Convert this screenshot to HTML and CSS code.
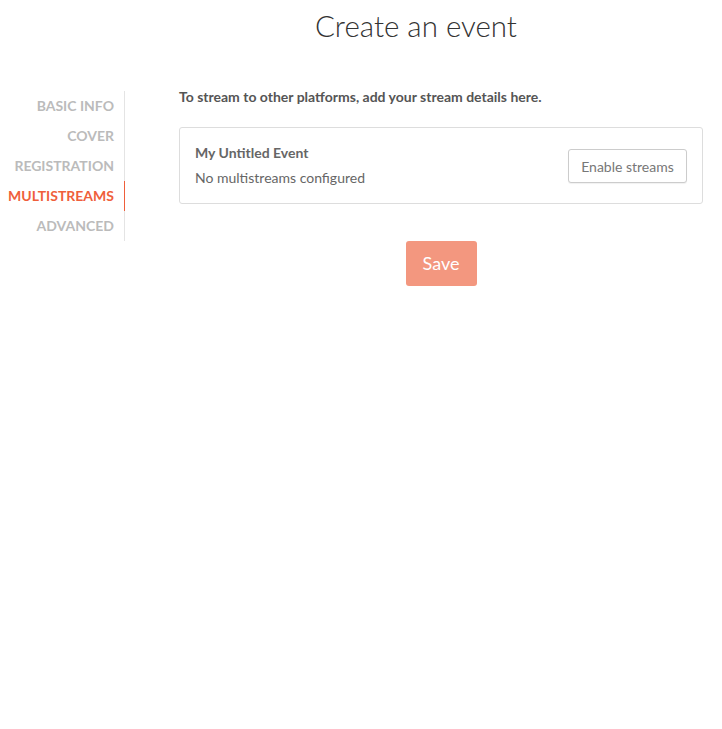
FILE: index.html
```html
<!DOCTYPE html>
<html>
<head>
<meta charset="utf-8">
<title>Create an event</title>
<link rel="stylesheet" href="styles.css">
</head>
<body>
  <header class="page-header">
    <h1 class="page-title">Create an event</h1>
  </header>
  <div class="layout">
    <nav class="sidebar">
      <a class="nav-item">BASIC INFO</a>
      <a class="nav-item">COVER</a>
      <a class="nav-item">REGISTRATION</a>
      <a class="nav-item active">MULTISTREAMS</a>
      <a class="nav-item">ADVANCED</a>
    </nav>
    <main class="content">
      <p class="intro">To stream to other platforms, add your stream details here.</p>
      <div class="card">
        <div class="card-text">
          <div class="card-title">My Untitled Event</div>
          <div class="card-sub">No multistreams configured</div>
        </div>
        <button class="btn-secondary">Enable streams</button>
      </div>
      <div class="actions">
        <button class="btn-save">Save</button>
      </div>
    </main>
  </div>
</body>
</html>
```

FILE: styles.css
```css
* { box-sizing: border-box; }
html, body { margin: 0; padding: 0; background: #fff; }
body {
  font-family: Lato, "Open Sans", "Liberation Sans", sans-serif;
  color: #555;
  width: 722px;
}
.page-header {
  padding: 8px 0 0 110px;
}
.page-title {
  margin: 0;
  font-size: 29.5px;
  line-height: 36px;
  font-weight: 300;
  color: #333;
  text-align: center;
}
.layout {
  display: flex;
  margin-top: 43px;
}
.sidebar {
  width: 125px;
  margin-top: 4px;
  display: flex;
  flex-direction: column;
}
.nav-item {
  display: block;
  height: 30px;
  line-height: 30px;
  padding-right: 10px;
  text-align: right;
  font-size: 14px;
  font-weight: 700;
  color: #bbb;
  border-right: 1px solid #e4e4e4;
  white-space: nowrap;
}
.nav-item.active {
  color: #ef5f3b;
  border-right-color: #ef5f3b;
}
.content {
  margin-left: 54px;
  width: 524px;
}
.intro {
  margin: 0 0 20px;
  font-size: 14px;
  line-height: 20px;
  font-weight: 700;
  color: #555;
}
.card {
  border: 1px solid #ddd;
  border-radius: 3px;
  padding: 15px;
  display: flex;
  align-items: center;
  justify-content: space-between;
}
.card-title {
  font-size: 14px;
  line-height: 20px;
  font-weight: 700;
  color: #666;
  margin-bottom: 5px;
}
.card-sub {
  font-size: 14px;
  line-height: 20px;
  color: #666;
}
.btn-secondary {
  font-family: inherit;
  font-size: 14px;
  color: #777;
  background: #fff;
  border: 1px solid #ccc;
  border-radius: 3px;
  height: 34px;
  width: 119px;
  padding: 0;
  margin-top: 1px;
  box-shadow: 0 1px 1px rgba(0,0,0,0.06);
}
.actions {
  display: flex;
  justify-content: center;
  margin-top: 37px;
}
.btn-save {
  font-family: inherit;
  font-size: 18px;
  color: #fff;
  background: #f3977f;
  border: none;
  border-radius: 3px;
  width: 71px;
  height: 45px;
  padding: 0 0 2px;
}
```
